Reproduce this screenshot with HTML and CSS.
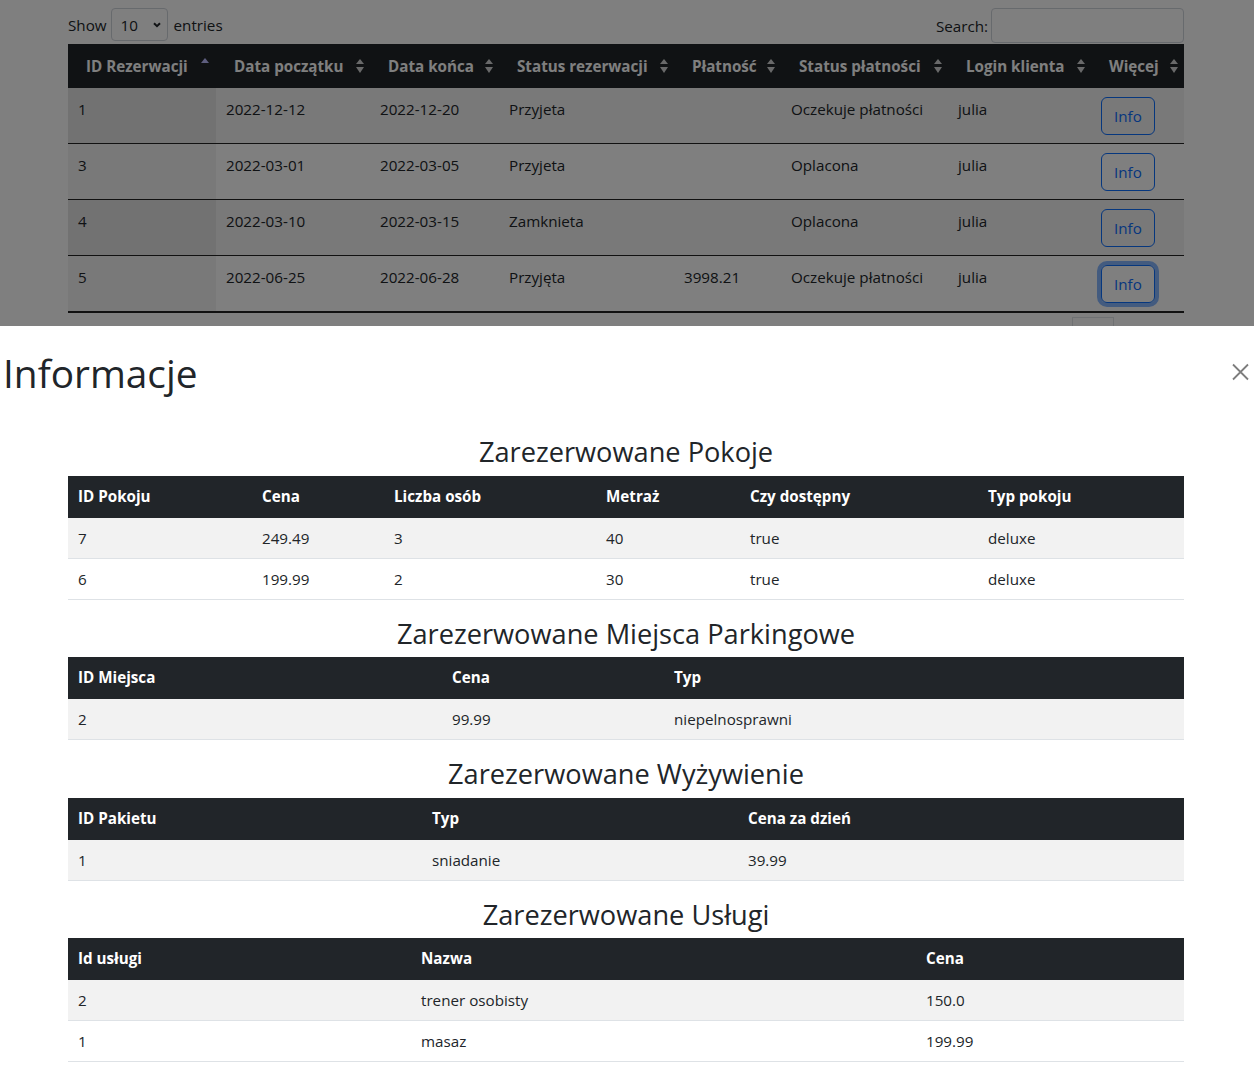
FILE: index.html
```html
<!DOCTYPE html>
<html lang="pl">
<head>
<meta charset="utf-8">
<title>Rezerwacje</title>
<link rel="stylesheet" href="styles.css">
</head>
<body>
<div class="page">
  <div class="dt-top">
    <div class="dt-length">
      <span>Show</span>
      <span class="select"><span>10</span><svg class="chev" width="8" height="6" viewBox="0 0 8 6"><path d="M1 1.2l3 3 3-3" fill="none" stroke="#212529" stroke-width="2"/></svg></span>
      <span class="entries">entries</span>
    </div>
    <div class="dt-search">
      <span>Search:</span>
      <span class="input"></span>
    </div>
  </div>
  <table class="dt">
    <colgroup><col><col><col><col><col><col><col><col></colgroup>
    <thead>
      <tr>
        <th class="sorting asc">ID Rezerwacji</th>
        <th class="sorting">Data początku</th>
        <th class="sorting">Data końca</th>
        <th class="sorting">Status rezerwacji</th>
        <th class="sorting">Płatność</th>
        <th class="sorting">Status płatności</th>
        <th class="sorting">Login klienta</th>
        <th class="sorting">Więcej</th>
      </tr>
    </thead>
    <tbody>
      <tr class="odd">
        <td class="sorted">1</td><td>2022-12-12</td><td>2022-12-20</td><td>Przyjeta</td><td></td><td>Oczekuje płatności</td><td>julia</td><td><button class="btn-outline">Info</button></td>
      </tr>
      <tr>
        <td class="sorted">3</td><td>2022-03-01</td><td>2022-03-05</td><td>Przyjeta</td><td></td><td>Oplacona</td><td>julia</td><td><button class="btn-outline">Info</button></td>
      </tr>
      <tr class="odd">
        <td class="sorted">4</td><td>2022-03-10</td><td>2022-03-15</td><td>Zamknieta</td><td></td><td>Oplacona</td><td>julia</td><td><button class="btn-outline">Info</button></td>
      </tr>
      <tr>
        <td class="sorted">5</td><td>2022-06-25</td><td>2022-06-28</td><td>Przyjęta</td><td>3998.21</td><td>Oczekuje płatności</td><td>julia</td><td><button class="btn-outline focused">Info</button></td>
      </tr>
    </tbody>
  </table>
  <div class="dt-bottom">
    <span class="page-link bordered">1</span>
    <span class="page-link">›</span>
    <span class="page-link">»</span>
  </div>
</div>

<div class="backdrop"></div>

<div class="modal">
  <div class="modal-header">
    <h1 class="modal-title">Informacje</h1>
    <button class="btn-close" aria-label="Close"><svg width="17" height="18" viewBox="0 0 17 18"><path d="M1 1.5L16 16.5M16 1.5L1 16.5" stroke="#7d7d7d" stroke-width="1.8" fill="none"/></svg></button>
  </div>
  <div class="modal-body">
    <h3 class="section-title">Zarezerwowane Pokoje</h3>
    <table class="info rooms">
      <colgroup><col><col><col><col><col><col></colgroup>
      <thead><tr><th>ID Pokoju</th><th>Cena</th><th>Liczba osób</th><th>Metraż</th><th>Czy dostępny</th><th>Typ pokoju</th></tr></thead>
      <tbody>
        <tr class="striped"><td>7</td><td>249.49</td><td>3</td><td>40</td><td>true</td><td>deluxe</td></tr>
        <tr><td>6</td><td>199.99</td><td>2</td><td>30</td><td>true</td><td>deluxe</td></tr>
      </tbody>
    </table>

    <h3 class="section-title">Zarezerwowane Miejsca Parkingowe</h3>
    <table class="info parking">
      <colgroup><col><col><col></colgroup>
      <thead><tr><th>ID Miejsca</th><th>Cena</th><th>Typ</th></tr></thead>
      <tbody>
        <tr class="striped"><td>2</td><td>99.99</td><td>niepelnosprawni</td></tr>
      </tbody>
    </table>

    <h3 class="section-title">Zarezerwowane Wyżywienie</h3>
    <table class="info meals">
      <colgroup><col><col><col></colgroup>
      <thead><tr><th>ID Pakietu</th><th>Typ</th><th>Cena za dzień</th></tr></thead>
      <tbody>
        <tr class="striped"><td>1</td><td>sniadanie</td><td>39.99</td></tr>
      </tbody>
    </table>

    <h3 class="section-title">Zarezerwowane Usługi</h3>
    <table class="info services">
      <colgroup><col><col><col></colgroup>
      <thead><tr><th>Id usługi</th><th>Nazwa</th><th>Cena</th></tr></thead>
      <tbody>
        <tr class="striped"><td>2</td><td>trener osobisty</td><td>150.0</td></tr>
        <tr><td>1</td><td>masaz</td><td>199.99</td></tr>
      </tbody>
    </table>
  </div>
</div>
</body>
</html>
```

FILE: styles.css
```css
* { box-sizing: border-box; }

html, body {
  margin: 0;
  padding: 0;
}

body {
  font-family: "Open Sans", "Noto Sans", sans-serif;
  font-size: 15.2px;
  line-height: 24px;
  color: #212529;
  background: #fff;
  overflow: hidden;
}

/* ---------- background page (DataTable) ---------- */
.page {
  padding: 8px 70px 0 68px;
}

.dt-top {
  display: flex;
  justify-content: space-between;
  align-items: flex-start;
  height: 35px;
}

.dt-length {
  display: flex;
  align-items: center;
  gap: 4px;
  height: 33px;
}

.entries {
  margin-left: 2px;
}

.select {
  display: flex;
  align-items: center;
  justify-content: space-between;
  width: 57px;
  height: 33px;
  padding: 0 6px 0 9px;
  border: 1px solid #ced4da;
  border-radius: 4px;
}

.chev { display: block; }

.dt-search {
  display: flex;
  align-items: center;
  gap: 3px;
  height: 35px;
}

.input {
  display: block;
  width: 193px;
  height: 35px;
  border: 1px solid #ced4da;
  border-radius: 4px;
}

table.dt {
  width: 1116px;
  margin-top: 1px;
  border-collapse: collapse;
  table-layout: fixed;
}

table.dt col:nth-child(1) { width: 148px; }
table.dt col:nth-child(2) { width: 154px; }
table.dt col:nth-child(3) { width: 129px; }
table.dt col:nth-child(4) { width: 175px; }
table.dt col:nth-child(5) { width: 107px; }
table.dt col:nth-child(6) { width: 167px; }
table.dt col:nth-child(7) { width: 143px; }
table.dt col:nth-child(8) { width: 93px; }

table.dt th {
  position: relative;
  padding: 10px 22px 10px 18px;
  background: #212529;
  color: #fff;
  font-weight: 700;
  text-align: left;
  white-space: nowrap;
}

table.dt th.sorting::before,
table.dt th.sorting::after {
  content: "";
  position: absolute;
  right: 6px;
  width: 0;
  height: 0;
  border-left: 4px solid transparent;
  border-right: 4px solid transparent;
}

table.dt th.sorting::before {
  top: 15px;
  border-bottom: 5px solid rgba(255, 255, 255, 0.8);
}

table.dt th.sorting::after {
  top: 23px;
  border-top: 6px solid rgba(255, 255, 255, 0.8);
}

table.dt th.asc::before {
  top: 14px;
  right: 7px;
  border-bottom-color: #bdbdff;
}

table.dt th.asc::after {
  display: none;
}

table.dt td {
  padding: 9px 10px 8px;
  vertical-align: top;
  border-bottom: 1px solid #222;
  white-space: nowrap;
}

table.dt tbody tr:last-child td {
  border-bottom-width: 2px;
}

table.dt tr.odd td {
  background: rgba(0, 0, 0, 0.05);
}

table.dt td.sorted {
  box-shadow: inset 0 0 0 9999px rgba(0, 0, 0, 0.05);
}

.btn-outline {
  display: inline-block;
  vertical-align: top;
  margin: 0;
  padding: 6px 12px;
  border: 1px solid #0d6efd;
  border-radius: 6px;
  background: transparent;
  color: #0d6efd;
  font: inherit;
  line-height: 24px;
}

.btn-outline.focused {
  box-shadow: 0 0 0 4px rgba(13, 110, 253, 0.5);
}

.dt-bottom {
  display: flex;
  justify-content: flex-end;
  margin-top: 4px;
}

.page-link {
  display: block;
  width: 35px;
  height: 38px;
  padding: 6px 0;
  text-align: center;
  color: #0d6efd;
}

.page-link.bordered {
  width: 42px;
  border: 1px solid #dee2e6;
}

/* ---------- modal ---------- */
.backdrop {
  position: fixed;
  inset: 0;
  background: rgba(0, 0, 0, 0.5);
}

.modal {
  position: fixed;
  top: 326px;
  left: 0;
  right: 0;
  bottom: 0;
  background: #fff;
  overflow: hidden;
}

.modal-header {
  display: flex;
  justify-content: space-between;
  align-items: flex-start;
  padding: 23px 5px 0 3px;
}

.modal-title {
  margin: 0;
  font-size: 38.8px;
  line-height: 48px;
  font-weight: 500;
}

.btn-close {
  display: block;
  width: 17px;
  height: 18px;
  margin-top: 14px;
  padding: 0;
  border: 0;
  background: transparent;
}

.btn-close svg { display: block; }

.modal-body {
  padding: 37px 70px 0 68px;
}

.section-title {
  margin: 0 0 7px;
  padding-top: 1px;
  font-size: 27.2px;
  line-height: 33.6px;
  font-weight: 500;
  text-align: center;
}

table.info {
  width: 100%;
  margin-bottom: 16px;
  border-collapse: collapse;
  table-layout: fixed;
}

table.info th {
  padding: 8px 10px 9px;
  background: #212529;
  color: #fff;
  font-weight: 700;
  text-align: left;
  border-bottom: 1px solid #212529;
}

table.info td {
  padding: 8px 10px;
  border-bottom: 1px solid #dee2e6;
}

table.info tr.striped td {
  background: #f2f2f2;
}

.rooms col:nth-child(1) { width: 184px; }
.rooms col:nth-child(2) { width: 132px; }
.rooms col:nth-child(3) { width: 212px; }
.rooms col:nth-child(4) { width: 144px; }
.rooms col:nth-child(5) { width: 238px; }
.rooms col:nth-child(6) { width: 206px; }

.parking col:nth-child(1) { width: 374px; }
.parking col:nth-child(2) { width: 222px; }
.parking col:nth-child(3) { width: 520px; }

.meals col:nth-child(1) { width: 354px; }
.meals col:nth-child(2) { width: 316px; }
.meals col:nth-child(3) { width: 446px; }

.services col:nth-child(1) { width: 343px; }
.services col:nth-child(2) { width: 505px; }
.services col:nth-child(3) { width: 268px; }
```
